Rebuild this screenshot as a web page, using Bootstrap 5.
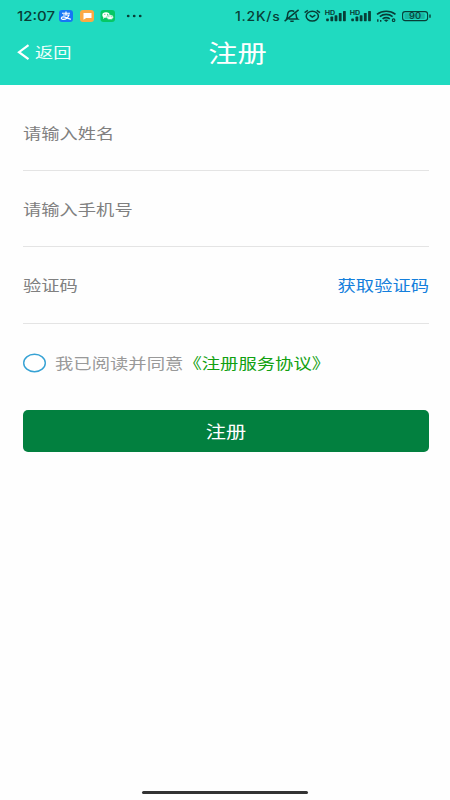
<!DOCTYPE html>
<html lang="zh-CN">
<head>
<meta charset="utf-8">
<meta name="viewport" content="width=device-width, initial-scale=1">
<title>注册</title>
<link href="https://cdn.jsdelivr.net/npm/bootstrap@5.3.0/dist/css/bootstrap.min.css" rel="stylesheet">
<style>
body{font-family:"Noto Sans CJK SC","Noto Sans",sans-serif;background:#fefefe;height:800px;overflow:hidden}
.app-top{background:#20dac0;height:85px}
.status{height:32px;padding-left:17px;padding-right:18px;font:500 15px/32px Inter,sans-serif;color:#083e37}
.status svg{display:block;flex:none}
.clock-text{width:42px;white-space:nowrap}
.clock-text .squash,.speed .squash{transform:scaleY(.9)}
.speed{width:49px;font-size:14px;letter-spacing:.75px;white-space:nowrap}
.squash{display:inline-block;transform:scaleY(.82)}
.titlebar{height:39px;grid-template-columns:1fr auto 1fr;padding:0 17px}
.back{color:#effffb;font-size:18.2px;line-height:39px}
.title{font-size:29.3px;line-height:39px;color:#fff;font-weight:400;padding-left:25px}
.page{padding:9px 21px 0 23px}
.field{height:76.5px;border-bottom:1px solid #e4e4e4}
.field input,.field .btn{font-size:18.3px;line-height:28px;transform:scaleY(.82)}
.field input,.field input:focus{background:transparent;box-shadow:none;color:#444}
.field input::placeholder{color:#808080;opacity:1}
.field .btn{color:#147fdc}
.field.code{padding-bottom:1px}
.agree{height:79px;font-size:18.35px;color:#999;white-space:nowrap}
.agree a{color:#10a010}
.submit{height:42px;margin-top:7.5px;background:#02803f;color:#fff;border-radius:5px;font-size:20.2px}
.submit:hover{background:#02733a;color:#fff}
.home{width:166px;height:3px;border-radius:2px;background:#333;margin-bottom:6px}
</style>
<script src="https://cdn.jsdelivr.net/npm/bootstrap@5.3.0/dist/js/bootstrap.bundle.min.js"></script>
</head>
<body class="d-flex flex-column">
<header class="app-top">
  <div class="status d-flex align-items-center">
    <span class="clock-text"><span class="squash">12:07</span></span>
    <svg width="84" height="12" viewBox="0 0 84 12">
      <rect width="14" height="12" rx="3" fill="#1677f5"/>
      <path d="M3 3.2h8M7 1.4v3.5M4 5h6C9 7.5 6.5 9.6 4 9.4 1.6 9.2 2 6.8 4.2 6.9 7 7 9 8.7 12 9.3" fill="none" stroke="#fff" stroke-width="1.15"/>
      <rect x="21" width="14" height="12" rx="3" fill="#fba944"/>
      <path d="M24.5 3h8v5h-5.3l-2.7 1.8z" fill="#fff"/>
      <rect x="41.5" width="14.5" height="12" rx="3" fill="#06c765"/>
      <ellipse cx="47" cy="5" rx="3.7" ry="2.7" fill="#fff"/><path d="M44.5 6.5 44 9l2-1.6z" fill="#fff"/>
      <ellipse cx="51" cy="7.2" rx="3.3" ry="2.4" fill="#fff" stroke="#06c765" stroke-width=".5"/>
      <path d="M45.4 4.4h.9M48 4.4h.9M49.5 6.7h.8M51.8 6.7h.8" stroke="#06a354" stroke-width=".8"/>
      <g fill="#083e37"><ellipse cx="69.2" cy="6" rx="1.4" ry="1.2"/><ellipse cx="75.2" cy="6" rx="1.4" ry="1.2"/><ellipse cx="81.2" cy="6" rx="1.4" ry="1.2"/></g>
    </svg>
    <span class="speed ms-auto"><span class="squash">1.2K/s</span></span>
    <svg width="148" height="16" viewBox="284 8 148 16" fill="none" stroke="#083e37" stroke-width="1.5">
      <path d="M286.2 19c1.5-1.2 1.3-3 1.4-4.5.2-2.4 1.9-3.7 4.2-3.7 1 0 1.8.3 2.4.8M296 13.6c.2 2.2 0 4.2 1.6 5.4h-9M290.3 21.2h3.4M298.6 9.8 284.6 21.2"/>
      <ellipse cx="312.3" cy="16.2" rx="6.1" ry="4.9"/><path d="M304.6 12.6l3.3-2.3M320 12.6l-3.3-2.3M309.7 15.2l2.6 2 3-2"/>
      <g id="signal" stroke="none" fill="#083e37"><text x="324.7" y="14.6" font-family="Inter,sans-serif" font-size="5.8" font-weight="700" textLength="10.5" lengthAdjust="spacingAndGlyphs">HD</text>
      <rect x="326.2" y="18.6" width="2.6" height="2.6" rx=".6"/><rect x="330.4" y="16.6" width="2.8" height="4.6" rx=".6"/><rect x="334.6" y="15.2" width="2.8" height="6" rx=".6"/><rect x="338.8" y="13" width="2.8" height="8.2" rx=".6"/><rect x="343" y="11" width="2.8" height="10.2" rx=".6"/></g>
      <use href="#signal" x="25.1"/>
      <path d="M377 14.4c5.3-4.2 13.2-4.2 18.5 0M379.8 16.7c3.8-3 9-3 12.8 0M382.6 18.9c2.2-1.6 5-1.6 7.2 0" stroke-width="1.7"/>
      <path d="M383.8 20.1q2.4-1.4 4.8 0l-2.4 2z" fill="#083e37" stroke="none"/>
      <path d="M377.8 19.2v2.6M380.7 20v1.8" stroke-width="1.4"/><ellipse cx="393.6" cy="20.2" rx="1.3" ry="1.3" stroke-width="1.1"/>
      <rect x="402.6" y="11.6" width="25" height="9" rx="2.6" stroke-width="1.1"/><rect x="404.5" y="13.2" width="20.2" height="5.8" rx="1" fill="#18b8a2" stroke="none"/>
      <path d="M430 14.5v3.2" stroke-width="1.4"/>
      <text x="409" y="19.2" stroke="none" fill="#083e37" font-family="Inter,sans-serif" font-weight="500" font-size="8.5" textLength="12" lengthAdjust="spacingAndGlyphs">90</text>
    </svg>
  </div>
  <nav class="titlebar d-grid align-items-center">
    <a href="#" class="back text-decoration-none d-flex align-items-center">
      <svg width="18" height="18" viewBox="0 0 18 18" fill="none" stroke="#fff" stroke-width="2.2"><path d="M11.5 2.2 2 9.2l9.5 7"/></svg>
      <span class="squash">返回</span>
    </a>
    <h1 class="title squash m-0">注册</h1>
  </nav>
</header>
<main class="page flex-grow-1">
  <form>
    <div class="field d-flex align-items-center"><input class="form-control border-0 p-0" type="text" placeholder="请输入姓名" aria-label="姓名"></div>
    <div class="field d-flex align-items-center"><input class="form-control border-0 p-0" type="tel" placeholder="请输入手机号" aria-label="手机号"></div>
    <div class="field code d-flex align-items-center"><input class="form-control border-0 p-0" type="text" placeholder="验证码" aria-label="验证码"><button type="button" class="btn border-0 p-0 flex-shrink-0">获取验证码</button></div>
    <div class="agree d-flex align-items-center">
      <svg class="me-2 flex-shrink-0" width="24" height="20" viewBox="0 0 24 20"><ellipse cx="11.5" cy="10" rx="10.8" ry="8.7" fill="#fff" stroke="#36a2d4" stroke-width="1.4"/></svg>
      <span class="squash">我已阅读并同意<a href="#" class="text-decoration-none">《注册服务协议》</a></span>
    </div>
    <button type="button" class="submit btn border-0 w-100 p-0 d-block"><span class="squash">注册</span></button>
  </form>
</main>
<div class="home mx-auto"></div>
</body>
</html>
